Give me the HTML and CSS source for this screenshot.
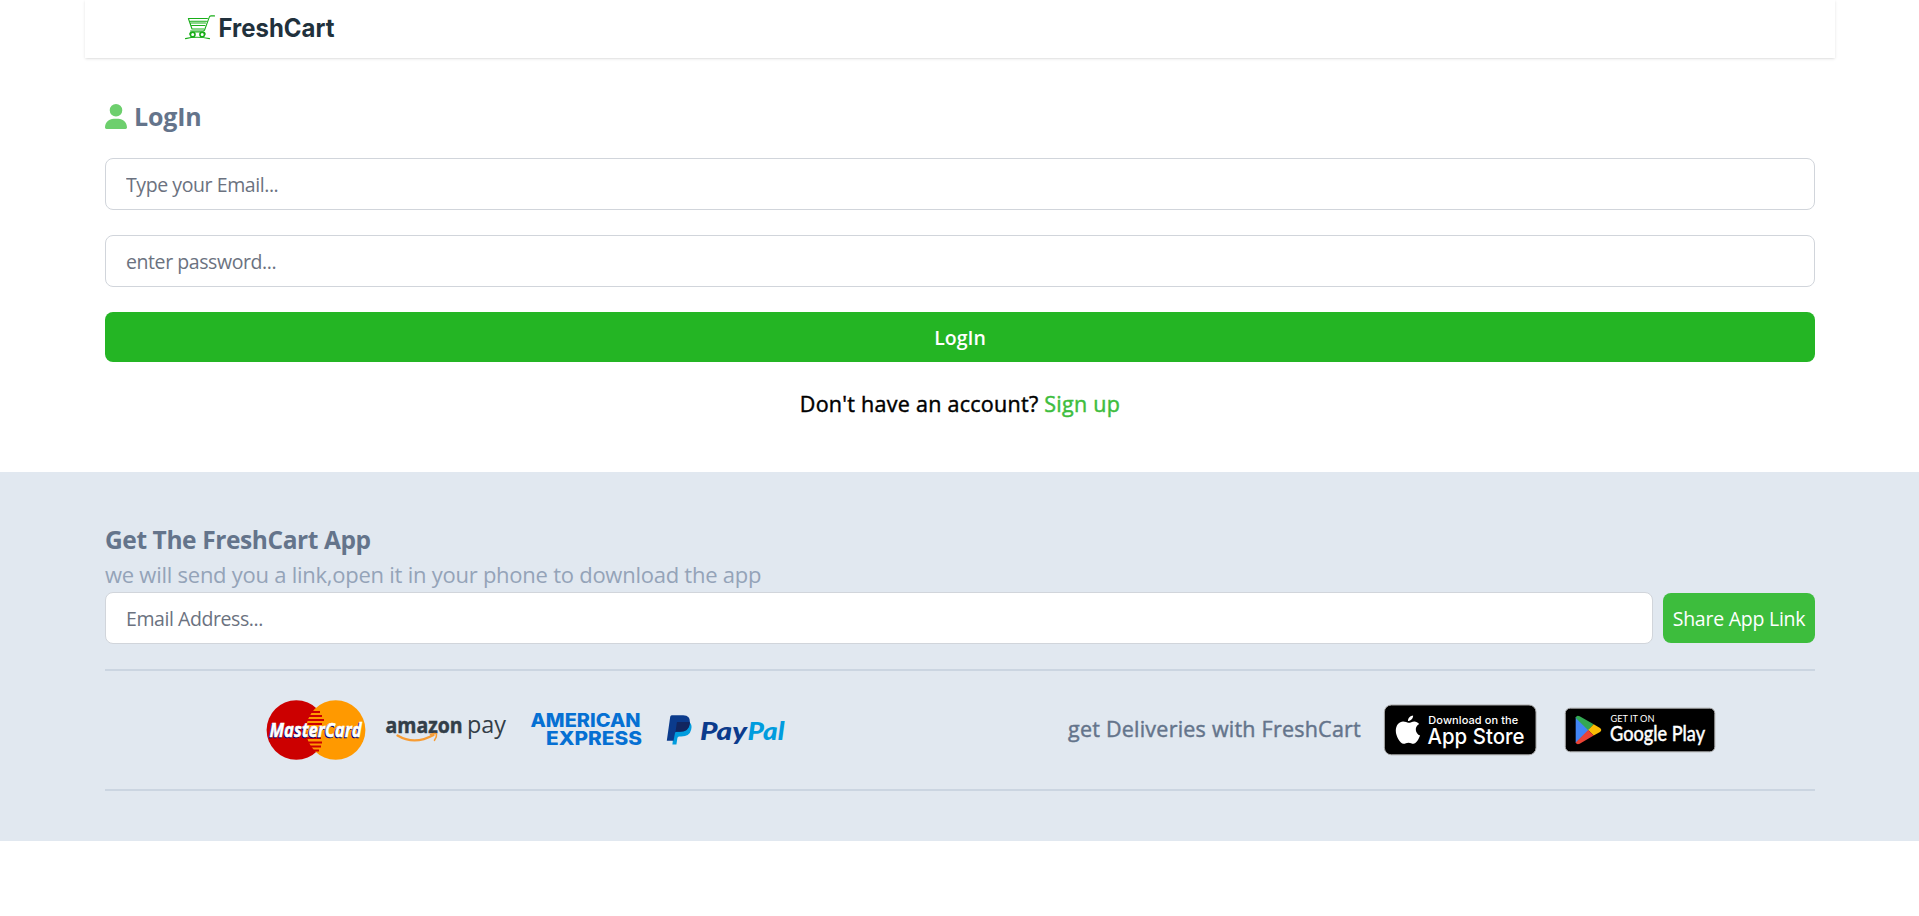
FILE: index.html
```html
<!DOCTYPE html>
<html lang="en">
<head>
<meta charset="utf-8">
<title>FreshCart</title>
<link rel="stylesheet" href="styles.css">
</head>
<body>
<header class="navbar">
  <svg class="brand" width="160" height="38" viewBox="185 8 160 38" role="img" aria-label="FreshCart">
    <g fill="none" stroke="#18ad18" stroke-width="1.100" stroke-linecap="round" stroke-linejoin="round">
      <path d="M214.500 15.900h-3.500q-1.300 0-1.800 1.500l-4.600 12.600q-.4 1-1.600 1h-12.500M207.400 18.500h-19l3.600 10.500h11.800M190.500 21.200h16M191 23h14.500M191.800 25.500h13"/>
      <path d="M189.800 34.300q0-2.300 2.500-2.300h10.500q2.300 0 2.300 2.300M185.500 38.600q6-1.400 12-1.300t12 1.300"/>
      <circle cx="192.700" cy="34.500" r="2.300" stroke-width="1.600"/><circle cx="202.200" cy="34.500" r="2.300" stroke-width="1.600"/>
    </g>
    <text x="218.500" y="37" class="brand-name" textLength="116" lengthAdjust="spacingAndGlyphs">FreshCart</text>
  </svg>
</header>
<main class="login">
  <h1 class="login-title">
    <svg width="22" height="25" viewBox="0 0 448 512" preserveAspectRatio="none"><path fill="#6dcf6d" d="M224 256A128 128 0 1 0 224 0a128 128 0 1 0 0 256zm-45.700 48C79.800 304 0 383.800 0 482.300 0 498.700 13.300 512 29.700 512h388.600c16.400 0 29.700-13.300 29.700-29.700C448 383.800 368.200 304 269.700 304z"/></svg>
    <span>LogIn</span>
  </h1>
  <form class="login-form">
    <input class="field field-email" type="email" placeholder="Type your Email...">
    <input class="field field-pass" type="password" placeholder="enter password...">
    <button class="login-button" type="button">LogIn</button>
  </form>
  <p class="signup"><span>Don't have an account?</span> <a class="signup-link">Sign up</a></p>
</main>
<footer class="footer">
  <h2 class="app-title">Get The FreshCart App</h2>
  <p class="app-text">we will send you a link,open it in your phone to download the app</p>
  <div class="share">
    <input class="field field-share" type="email" placeholder="Email Address...">
    <button class="share-button" type="button">Share App Link</button>
  </div>
  <div class="partners">
    <div class="payments">
      <svg width="100" height="62" viewBox="266 699 100 62" role="img" aria-label="MasterCard">
        <circle cx="296.300" cy="730" r="29.700" fill="#c00"/>
        <circle cx="335.700" cy="730" r="29.700" fill="#f90"/>
        <path stroke="#c00" stroke-width="1.900" d="M310 712h10M308 716h14M307 720h17M307 724h15M307 738h14M307 742.500h15M309 746.500h12M311 750.500h8"/>
        <g class="mastercard"><text x="268.500" y="738.300" fill="#006" stroke="#006" textLength="92" lengthAdjust="spacingAndGlyphs">MasterCard</text><text x="269.500" y="737" fill="#fff" stroke="#fff" textLength="92" lengthAdjust="spacingAndGlyphs">MasterCard</text></g>
      </svg>
      <svg width="122" height="32" viewBox="385 712 122 32" role="img" aria-label="amazon pay">
        <text x="385.500" y="731" class="amazon" textLength="77" lengthAdjust="spacingAndGlyphs">amazon</text>
        <text x="467" y="731" class="pay" textLength="39" lengthAdjust="spacingAndGlyphs">pay</text>
        <path d="M397.500 733.500q17 10 36-.5" fill="none" stroke="#f79c34" stroke-width="2.300" stroke-linecap="round"/>
        <path d="M430.500 732.500q3.500-1.500 6-.7q.5 3-2 6.500" fill="none" stroke="#f79c34" stroke-width="1.600" stroke-linecap="round"/>
      </svg>
      <svg width="113" height="34" viewBox="530 713 113 34" role="img" aria-label="American Express">
        <g class="amex"><text x="530.500" y="727.300" textLength="110" lengthAdjust="spacingAndGlyphs">AMERICAN</text><text x="546" y="744.700" textLength="96" lengthAdjust="spacingAndGlyphs">EXPRESS</text></g>
      </svg>
      <svg width="120" height="34" viewBox="666 713 120 34" role="img" aria-label="PayPal">
        <path fill="#009cde" d="M675 722h14q3.500 2 2.200 7.500-1.500 7-10 7h-2.200q-1.300 0-1.600 1.500l-1 6.500h-4z"/>
        <path fill="#0b3b8c" d="M671.700 715.200h11.500q7.300 0 6.800 7.500-.8 9-10.200 9h-3.300q-1.200 0-1.500 1.300l-1.500 7.700h-6.700l3.400-24q.3-1.500 1.500-1.500z"/>
        <path fill="#12265f" d="M677.500 722h11.800q.7 0 .5 1.500-1 8.200-9.800 8.200h-3.500q-.7 0-1 .5l1.200-8.800q.2-1.400.8-1.400z"/>
        <g class="paypal"><text x="700" y="739.500" fill="#0b3b8c" textLength="47" lengthAdjust="spacingAndGlyphs">Pay</text><text x="747.500" y="739.500" fill="#009cde" textLength="37" lengthAdjust="spacingAndGlyphs">Pal</text></g>
      </svg>
    </div>
    <div class="delivery">
      <span class="delivery-text">get Deliveries with FreshCart</span>
      <svg class="store-apple" width="154" height="52" viewBox="1383 704 154 52" role="img" aria-label="Download on the App Store">
        <rect x="1384.400" y="705" width="151.600" height="49.800" rx="7" fill="#000" stroke="#a6a6a6"/>
        <path fill="#fff" d="M1408.500 722.800c2 0 3.500-1.400 5.800-1.400 1.800 0 3.700 1 4.800 2.600-5 2.800-4 9.600 1 11.600-1.300 3.500-4 8.200-6.700 8.200-1.800 0-2.600-1.100-4.900-1.100s-3 1.100-4.900 1.100c-3.500 0-7.800-7.500-7.800-13 0-5.600 3.500-9.200 7.300-9.200 2.100 0 4 1.200 5.400 1.200zM1408 721.100c-.2-2.800 2.400-5.500 5.100-5.600.2 2.900-2.200 5.500-5.100 5.600z"/>
        <g class="store"><text x="1428.300" y="723.500" font-size="11" font-weight="500" textLength="90" lengthAdjust="spacing">Download on the</text><text x="1427.500" y="743.500" font-size="22" font-weight="500" textLength="97" lengthAdjust="spacingAndGlyphs">App Store</text></g>
      </svg>
      <svg width="152" height="46" viewBox="1564 707 152 46" role="img" aria-label="Get it on Google Play">
        <rect x="1565.300" y="708.200" width="149.500" height="43.600" rx="5" fill="#000" stroke="#a6a6a6"/>
        <path fill="#4285f4" d="M1575.700 717v26l13.800-13.300z"/>
        <path fill="#34a853" d="M1575.700 717.500q1-2.800 4-1.300l14 8.100-5.500 6-12.500-12.200z"/>
        <path fill="#fbbc04" d="M1593.700 724.300l6.300 3.600q2.500 2 0 4l-6.300 3.600-5.500-5.500z"/>
        <path fill="#ea4335" d="M1588.200 730l5.500 5.500-14 8.200q-3 1.300-4-1.300z"/>
        <g class="google"><text x="1610.500" y="722" font-size="9.300" textLength="44" lengthAdjust="spacingAndGlyphs">GET IT ON</text><text x="1610" y="741" font-size="20.500" font-weight="400" stroke="#fff" stroke-width=".5" textLength="95" lengthAdjust="spacingAndGlyphs">Google Play</text></g>
      </svg>
    </div>
  </div>
</footer>
</body>
</html>
```
FILE: styles.css
```css
* { box-sizing: border-box; }
body { margin: 0; background: #fff; font-family: "Open Sans", "Noto Sans", sans-serif; color: #000; }
h1, h2, p { margin: 0; }
svg { display: block; flex: none; overflow: visible; }
.navbar { height: 58px; margin: 0 84px 0 85px; padding: 8px 0 0 100px; box-shadow: 0 1px 3px rgba(0,0,0,.1), 0 1px 2px -1px rgba(0,0,0,.1); }
.brand-name { font: 700 25px Inter, sans-serif; fill: #21313c; }
.login { height: 414px; padding: 39px 104px 0 105px; }
.login-title { display: flex; align-items: center; gap: 7px; height: 38px; color: #64748b; font-size: 25px; line-height: 38px; font-weight: 700; letter-spacing: -.2px; }
.login-form { display: flex; flex-direction: column; gap: 25px; padding-top: 23px; }
.field { display: block; width: 100%; height: 52px; padding: 1px 20px 0; border: 1px solid #d1d5db; border-radius: 8px; background: #fff; outline: 0; font: 400 19.500px "Open Sans", sans-serif; letter-spacing: -.42px; }
.field::placeholder { color: #6b7280; opacity: 1; }
.login-button { height: 50px; padding: 1px 0 0; border: 0; border-radius: 8px; background: #24b524; color: #fff; font: 600 19.500px "Open Sans", sans-serif; }
.signup { margin-top: 24px; text-align: center; font-size: 21.500px; line-height: 35px; letter-spacing: .27px; -webkit-text-stroke: .45px currentColor; }
.signup-link { color: #3dbd3d; }
.footer { height: 369px; padding: 49px 104px 0 105px; background: #e1e8f0; }
.app-title { height: 37px; color: #64748b; font-size: 24.500px; line-height: 38px; font-weight: 700; letter-spacing: -.4px; }
.app-text { height: 34px; color: #94a3b8; font-size: 22px; line-height: 32px; letter-spacing: -.25px; }
.share { display: flex; align-items: center; gap: 10px; height: 52px; }
.share .field { flex: 1; }
.share-button { width: 152px; height: 50px; padding: 0; border: 0; border-radius: 8px; background: #3dbd3d; color: #fff; font: 400 19.500px "Open Sans", sans-serif; letter-spacing: -.25px; white-space: nowrap; }
.partners { display: flex; justify-content: space-between; align-items: center; height: 122px; margin-top: 25px; padding: 0 99px 0 161px; border-top: 2px solid #cbd5e1; border-bottom: 2px solid #cbd5e1; }
.payments { display: flex; align-items: center; gap: 23px; }
.payments svg:first-child { margin-right: -4px; }
.delivery { display: flex; align-items: center; gap: 27px; }
.delivery-text { width: 292px; padding-bottom: 3px; color: #64748b; font-size: 21.500px; letter-spacing: .23px; -webkit-text-stroke: .45px currentColor; white-space: nowrap; }
.store-apple { margin-left: -4px; }
.mastercard { font: italic 700 20px "Open Sans", sans-serif; stroke-width: .6px; }
.amazon { font: 700 22px "Open Sans", sans-serif; fill: #333e48; stroke: #333e48; stroke-width: .5px; }
.pay { font: 400 23px "Open Sans", sans-serif; fill: #333e48; }
.amex { font: 800 18.500px Inter, sans-serif; fill: #0670d3; }
.paypal { font: italic 900 25px Lato, sans-serif; }
.store { font-family: Inter, sans-serif; fill: #fff; }
.google { font-family: Lato, sans-serif; fill: #fff; }
```
